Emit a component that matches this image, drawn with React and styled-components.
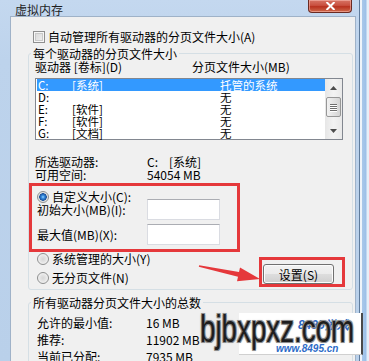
import React from "react";
import styled, { createGlobalStyle } from "styled-components";

const GlobalStyle = createGlobalStyle`
  html, body { margin: 0; padding: 0; }
  body {
    width: 369px; height: 361px; overflow: hidden;
    font-family: "Noto Sans CJK SC", "Noto Sans", sans-serif;
    font-size: 12px; color: #000;
  }
  * { box-sizing: border-box; }
`;

const Screen = styled.div`
  position: relative;
  width: 369px;
  height: 361px;
  overflow: hidden;
  display: flex;
  background: #e6eff8;
`;

const Window = styled.div`
  width: 360px;
  flex: none;
  display: flex;
  flex-direction: column;
  padding: 0 3px 0 10px;
  background: linear-gradient(to bottom, #c4d8ef 0, #bdd3ec 60px, #b9d0ea 100%);
  border-right: 1px solid #5f7b9b;
`;

const DesktopEdge = styled.div`
  flex: 1;
  background: linear-gradient(
    to right,
    #eef4fa 0,
    #eef4fa 2px,
    #a9c8ea 2px,
    #9cc0e8 6px,
    #e6eff8 7px
  );
`;

const TitleBar = styled.div`
  height: 22px;
  display: flex;
  justify-content: space-between;
  align-items: flex-start;
`;

const TitleText = styled.div`
  padding: 3px 0 0 5px;
  font-size: 12px;
  line-height: 13px;
  color: #1e1e1e;
`;

const CloseButton = styled.div`
  width: 44px;
  height: 13px;
  margin-right: 4px;
  display: flex;
  align-items: flex-end;
  justify-content: center;
  padding-bottom: 2px;
  border: 1px solid #6a2a22;
  border-top: none;
  border-radius: 0 0 4px 4px;
  background: linear-gradient(to bottom, #d77465 0, #c9503f 45%, #b8321f 55%, #cf6a4c 100%);
  box-shadow: inset 0 0 0 1px rgba(255, 200, 190, 0.5);
`;

const Client = styled.div`
  flex: 1;
  background: #f0f0f0;
  border: 1px solid #9fb2c8;
  border-bottom: none;
  padding: 13px 2px 0 17px;
  display: flex;
  flex-direction: column;
`;

const CheckRow = styled.div`
  display: flex;
  align-items: center;
  gap: 3px;
  height: 13px;
  line-height: 13px;
  margin-left: 5px;
`;

const CheckBox = styled.span`
  width: 12px;
  height: 12px;
  flex: none;
  border: 1px solid #8f8f8f;
  background: linear-gradient(135deg, #d6d6d6 0, #f2f2f2 100%);
  box-shadow: inset 0 0 0 1px #f6f6f6, inset 0 0 0 2px #c9c9c9;
`;

const GroupBox = styled.fieldset`
  margin: ${(p) => p.$mt || 0}px 0 0 0;
  padding: 0 0 ${(p) => p.$pb || 0}px 0;
  border: 1px solid #d5dfe5;
  border-radius: 3px;
  min-width: 0;
`;

const Legend = styled.legend`
  margin-left: 2px;
  padding: 0 2px;
  font-size: 12px;
  line-height: 13px;
`;

const HeaderRow = styled.div`
  display: grid;
  grid-template-columns: 157px 1fr;
  padding-left: 6px;
  height: 13px;
  line-height: 13px;
`;

const ListBox = styled.div`
  margin: 5px 9px 0 6px;
  height: 62px;
  border: 1px solid #828790;
  background: #fff;
  display: flex;
`;

const ListRows = styled.div`
  flex: 1;
  padding-left: 1px;
`;

const ListRow = styled.div`
  display: grid;
  grid-template-columns: 34px 148px 1fr;
  height: 12px;
  line-height: 12px;
  font-size: 11.5px;
  padding-left: 1px;
  background: ${(p) => (p.$selected ? "#3399ff" : "transparent")};
  color: ${(p) => (p.$selected ? "#fff" : "#000")};
`;

const ScrollBar = styled.div`
  width: 17px;
  flex: none;
  display: flex;
  flex-direction: column;
  background: linear-gradient(to right, #e6e6e6, #f3f3f3 50%, #e9e9e9);
`;

const ScrollArrow = styled.div`
  height: 17px;
  display: flex;
  align-items: center;
  justify-content: center;
`;

const ScrollTrack = styled.div`
  flex: 1;
  padding: 1px 1px 0 1px;
`;

const Thumb = styled.div`
  height: 20px;
  border: 1px solid #979797;
  border-radius: 2px;
  background: linear-gradient(to right, #f2f2f2, #e3e3e3 50%, #d4d4d4);
  display: flex;
  flex-direction: column;
  align-items: center;
  justify-content: center;
  gap: 1px;
`;

const Grip = styled.span`
  width: 7px;
  height: 1px;
  background: #6e6e6e;
  box-shadow: 0 1px 0 #fff;
`;

const InfoRow = styled.div`
  display: grid;
  grid-template-columns: ${(p) => p.$col || 112}px 1fr;
  padding-left: ${(p) => p.$pl || 6}px;
  height: 13px;
  line-height: 13px;
  margin-top: ${(p) => p.$mt || 0}px;
`;

const Gap = styled.span`
  display: inline-block;
  width: ${(p) => p.$w}px;
`;

const RedBox = styled.div`
  margin-top: 2px;
  width: 211px;
  border: 3px solid #e5383b;
  padding: 4px 0 4px 5px;
`;

const RadioRow = styled.div`
  display: flex;
  align-items: center;
  gap: 3px;
  height: 13px;
  line-height: 13px;
  margin-top: ${(p) => p.$mt || 0}px;
`;

const Radio = styled.span`
  width: 12px;
  height: 12px;
  flex: none;
  border-radius: 50%;
  border: 1px solid #8e8f8f;
  background: ${(p) =>
    p.$checked
      ? "radial-gradient(circle, #9ad6ff 0, #3a8ee0 1.5px, #184f9a 3.5px, #d9d9d9 4px, #f7f7f7 6px)"
      : "radial-gradient(circle, #d6d6d6 0, #e4e4e4 3px, #f7f7f7 6px)"};
`;

const FieldRow = styled.div`
  display: grid;
  grid-template-columns: 110px 73px;
  align-items: center;
  height: 21px;
  margin-top: ${(p) => p.$mt || 0}px;
`;

const TextInput = styled.div`
  width: 73px;
  height: 21px;
  background: #fff;
  border: 1px solid #dadce2;
  border-top-color: #abadb3;
`;

const BottomSection = styled.div`
  display: flex;
  justify-content: space-between;
  align-items: flex-start;
`;

const RadioColumn = styled.div`
  padding-left: 8px;
  display: flex;
  flex-direction: column;
`;

const SetFrame = styled.div`
  margin: 5px 7px 0 0;
  width: 86px;
  border: 3px solid #e5383b;
  padding: 4px 0 0 1px;
`;

const SetButton = styled.div`
  width: 71px;
  height: 20px;
  border: 1px solid #707070;
  border-radius: 3px;
  background: linear-gradient(to bottom, #f2f2f2 0, #ebebeb 50%, #dddddd 51%, #cfcfcf 100%);
  box-shadow: inset 0 0 0 1px #fcfcfc;
  display: flex;
  align-items: center;
  justify-content: center;
  line-height: 13px;
`;

const Overlay = styled.svg`
  position: absolute;
  left: 0;
  top: 0;
  pointer-events: none;
`;

const WatermarkBox = styled.div`
  position: absolute;
  left: 239px;
  top: 313px;
  width: 124px;
  height: 42px;
  background: #fff;
  border-right: 2px solid #4a4a4a;
  border-bottom: 1px solid #d0d0d0;
`;

const WatermarkLogo = styled.div`
  position: absolute;
  left: 298px;
  top: 319px;
  font-family: "Liberation Sans", Arial, sans-serif;
  font-size: 12px;
  line-height: 13px;
  font-weight: bold;
  font-style: italic;
  color: #2a66c4;
`;

const WatermarkSite = styled.div`
  position: absolute;
  left: 276px;
  top: 343px;
  font-family: "Liberation Sans", Arial, sans-serif;
  font-size: 10px;
  line-height: 11px;
  font-weight: bold;
  font-style: italic;
  color: #2d6cc8;
`;

const WatermarkBig = styled.div`
  position: absolute;
  left: 200px;
  top: 307px;
  font-family: "Liberation Sans", Arial, sans-serif;
  font-size: 38px;
  line-height: 44px;
  color: #1d1d1d;
  transform: scaleX(0.73);
  transform-origin: left top;
  white-space: nowrap;
  text-shadow: 1px 1px 0 #8c8c8c, -1px -1px 0 #8c8c8c, 1px -1px 0 #8c8c8c,
    -1px 1px 0 #8c8c8c, 0 0 3px #a0a0a0;
`;

const drives = [
  { d: "C:", l: "[系统]", s: "托管的系统", sel: true },
  { d: "D:", l: "", s: "无" },
  { d: "E:", l: "[软件]", s: "无" },
  { d: "F:", l: "[软件]", s: "无" },
  { d: "G:", l: "[文档]", s: "无" },
];

export default function App() {
  return (
    <>
      <GlobalStyle />
      <Screen>
        <Window>
          <TitleBar>
            <TitleText>虚拟内存</TitleText>
            <CloseButton>
              <svg width="11" height="8" viewBox="0 0 11 8">
                <path d="M1.5 0 L9.5 8 M9.5 0 L1.5 8" stroke="#fff" strokeWidth="2" />
              </svg>
            </CloseButton>
          </TitleBar>
          <Client>
            <CheckRow>
              <CheckBox />
              <span>自动管理所有驱动器的分页文件大小(A)</span>
            </CheckRow>

            <GroupBox $mt={4} $pb={2}>
              <Legend>每个驱动器的分页文件大小</Legend>
              <HeaderRow>
                <span>驱动器 [卷标](D)</span>
                <span>分页文件大小(MB)</span>
              </HeaderRow>
              <ListBox>
                <ListRows>
                  {drives.map((r) => (
                    <ListRow key={r.d} $selected={r.sel}>
                      <span>{r.d}</span>
                      <span>{r.l}</span>
                      <span>{r.s}</span>
                    </ListRow>
                  ))}
                </ListRows>
                <ScrollBar>
                  <ScrollArrow>
                    <svg width="7" height="4" viewBox="0 0 7 4">
                      <path d="M0 4 L3.5 0 L7 4 Z" fill="#4d4d4d" />
                    </svg>
                  </ScrollArrow>
                  <ScrollTrack>
                    <Thumb>
                      <Grip />
                      <Grip />
                      <Grip />
                      <Grip />
                    </Thumb>
                  </ScrollTrack>
                  <ScrollArrow>
                    <svg width="7" height="4" viewBox="0 0 7 4">
                      <path d="M0 0 L3.5 4 L7 0 Z" fill="#4d4d4d" />
                    </svg>
                  </ScrollArrow>
                </ScrollBar>
              </ListBox>

              <InfoRow $mt={15}>
                <span>所选驱动器:</span>
                <span>
                  C:<Gap $w={11} />[系统]
                </span>
              </InfoRow>
              <InfoRow>
                <span>可用空间:</span>
                <span>54054 MB</span>
              </InfoRow>

              <RedBox>
                <RadioRow>
                  <Radio $checked />
                  <span>自定义大小(C):</span>
                </RadioRow>
                <FieldRow $mt={-4}>
                  <span>初始大小(MB)(I):</span>
                  <TextInput />
                </FieldRow>
                <FieldRow $mt={4}>
                  <span>最大值(MB)(X):</span>
                  <TextInput />
                </FieldRow>
              </RedBox>

              <BottomSection>
                <RadioColumn>
                  <RadioRow>
                    <Radio />
                    <span>系统管理的大小(Y)</span>
                  </RadioRow>
                  <RadioRow $mt={6}>
                    <Radio />
                    <span>无分页文件(N)</span>
                  </RadioRow>
                </RadioColumn>
                <SetFrame>
                  <SetButton>设置(S)</SetButton>
                </SetFrame>
              </BottomSection>
            </GroupBox>

            <GroupBox $mt={6}>
              <Legend>所有驱动器分页文件大小的总数</Legend>
              <InfoRow $col={109} $pl={8} $mt={7}>
                <span>允许的最小值:</span>
                <span>16 MB</span>
              </InfoRow>
              <InfoRow $col={109} $pl={8} $mt={4}>
                <span>推荐:</span>
                <span>11902 MB</span>
              </InfoRow>
              <InfoRow $col={109} $pl={8} $mt={4}>
                <span>当前已分配:</span>
                <span>7935 MB</span>
              </InfoRow>
            </GroupBox>
          </Client>
        </Window>
        <DesktopEdge />

        <Overlay width="369" height="361" viewBox="0 0 369 361">
          <polygon
            points="199.2,265.2 239,272 240,267.6 260,279 237,281.2 238,276.8 198.8,266.8"
            fill="#e5383b"
          />
        </Overlay>

        <WatermarkBox />
        <WatermarkLogo>8495游戏</WatermarkLogo>
        <WatermarkSite>www.8495.cn</WatermarkSite>
        <WatermarkBig>bjbxpxz.com</WatermarkBig>
      </Screen>
    </>
  );
}
